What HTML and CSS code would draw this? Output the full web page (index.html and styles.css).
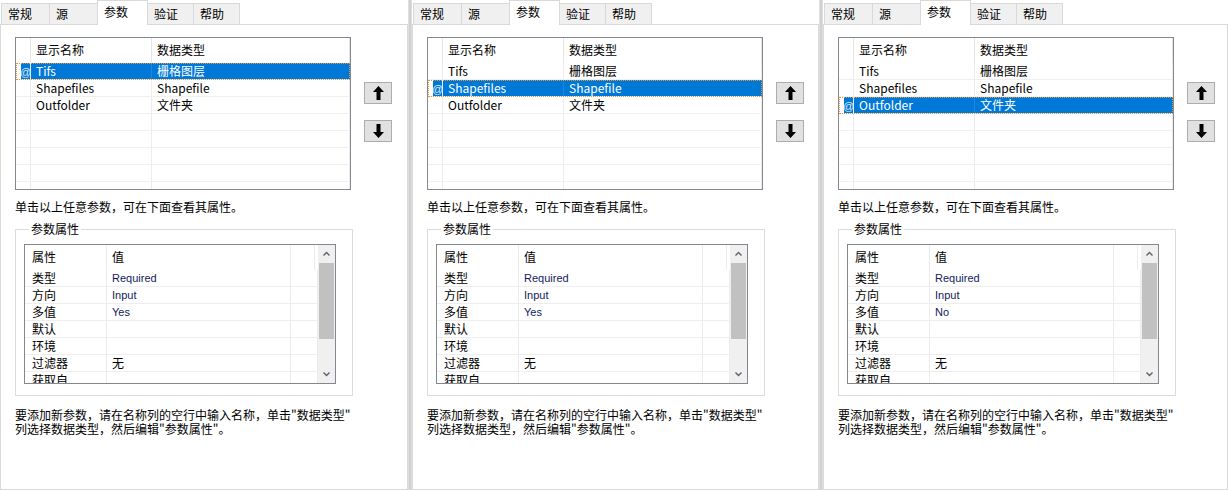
FILE: index.html
```html
<!DOCTYPE html>
<html lang="zh-CN">
<head>
<meta charset="utf-8">
<title>参数</title>
<link rel="stylesheet" href="styles.css">
</head>
<body>
<div class="screens">

  <section class="panel panel-a">
    <div class="tabs">
      <div class="tab">常规</div>
      <div class="tab">源</div>
      <div class="tab active">参数</div>
      <div class="tab narrow">验证</div>
      <div class="tab narrow">帮助</div>
    </div>
    <div class="page">
      <div class="top">
        <div class="plist">
          <div class="lrow head"><div class="rh"></div><div class="c1">显示名称</div><div class="c2">数据类型</div></div>
          <div class="lrow sel"><div class="rh"><span class="mark">@</span></div><div class="c1">Tifs</div><div class="c2">栅格图层</div></div>
          <div class="lrow"><div class="rh"></div><div class="c1">Shapefiles</div><div class="c2">Shapefile</div></div>
          <div class="lrow"><div class="rh"></div><div class="c1">Outfolder</div><div class="c2">文件夹</div></div>
          <div class="lrow"><div class="rh"></div><div class="c1"></div><div class="c2"></div></div>
          <div class="lrow"><div class="rh"></div><div class="c1"></div><div class="c2"></div></div>
          <div class="lrow"><div class="rh"></div><div class="c1"></div><div class="c2"></div></div>
          <div class="lrow"><div class="rh"></div><div class="c1"></div><div class="c2"></div></div>
          <div class="lrow"><div class="rh"></div><div class="c1"></div><div class="c2"></div></div>
        </div>
        <div class="btns">
          <div class="btn"><svg width="11" height="14" viewBox="0 0 11 14"><path d="M5.5 0 L11 6 L7.5 6 L7.5 14 L3.5 14 L3.5 6 L0 6 Z" fill="#000"/></svg></div>
          <div class="btn"><svg width="11" height="14" viewBox="0 0 11 14"><path d="M5.5 14 L11 8 L7.5 8 L7.5 0 L3.5 0 L3.5 8 L0 8 Z" fill="#000"/></svg></div>
        </div>
      </div>
      <p class="hint">单击以上任意参数，可在下面查看其属性。</p>
      <fieldset class="props">
        <legend>参数属性</legend>
        <div class="pgrid">
          <div class="pbody">
            <div class="prow phead"><div class="k">属性</div><div class="v">值</div><div class="e"></div></div>
            <div class="prow"><div class="k">类型</div><div class="v val">Required</div><div class="e"></div></div>
            <div class="prow"><div class="k">方向</div><div class="v val">Input</div><div class="e"></div></div>
            <div class="prow"><div class="k">多值</div><div class="v val">Yes</div><div class="e"></div></div>
            <div class="prow"><div class="k">默认</div><div class="v"></div><div class="e"></div></div>
            <div class="prow"><div class="k">环境</div><div class="v"></div><div class="e"></div></div>
            <div class="prow"><div class="k">过滤器</div><div class="v">无</div><div class="e"></div></div>
            <div class="prow"><div class="k">获取自</div><div class="v"></div><div class="e"></div></div>
          </div>
          <div class="scroll">
            <div class="sarrow"><svg width="7" height="5" viewBox="0 0 7 5"><path d="M0.5 4.5 L3.5 1.5 L6.5 4.5" fill="none" stroke="#606060" stroke-width="1.4"/></svg></div>
            <div class="strack"><div class="thumb"></div></div>
            <div class="sarrow"><svg width="7" height="5" viewBox="0 0 7 5"><path d="M0.5 0.5 L3.5 3.5 L6.5 0.5" fill="none" stroke="#606060" stroke-width="1.4"/></svg></div>
          </div>
        </div>
      </fieldset>
      <p class="note">要添加新参数，请在名称列的空行中输入名称，单击"数据类型"<br>列选择数据类型，然后编辑"参数属性"。</p>
    </div>
  </section>

  <div class="divider"></div>

  <section class="panel panel-b">
    <div class="tabs">
      <div class="tab">常规</div>
      <div class="tab">源</div>
      <div class="tab active">参数</div>
      <div class="tab narrow">验证</div>
      <div class="tab narrow">帮助</div>
    </div>
    <div class="page">
      <div class="top">
        <div class="plist">
          <div class="lrow head"><div class="rh"></div><div class="c1">显示名称</div><div class="c2">数据类型</div></div>
          <div class="lrow"><div class="rh"></div><div class="c1">Tifs</div><div class="c2">栅格图层</div></div>
          <div class="lrow sel"><div class="rh"><span class="mark">@</span></div><div class="c1">Shapefiles</div><div class="c2">Shapefile</div></div>
          <div class="lrow"><div class="rh"></div><div class="c1">Outfolder</div><div class="c2">文件夹</div></div>
          <div class="lrow"><div class="rh"></div><div class="c1"></div><div class="c2"></div></div>
          <div class="lrow"><div class="rh"></div><div class="c1"></div><div class="c2"></div></div>
          <div class="lrow"><div class="rh"></div><div class="c1"></div><div class="c2"></div></div>
          <div class="lrow"><div class="rh"></div><div class="c1"></div><div class="c2"></div></div>
          <div class="lrow"><div class="rh"></div><div class="c1"></div><div class="c2"></div></div>
        </div>
        <div class="btns">
          <div class="btn"><svg width="11" height="14" viewBox="0 0 11 14"><path d="M5.5 0 L11 6 L7.5 6 L7.5 14 L3.5 14 L3.5 6 L0 6 Z" fill="#000"/></svg></div>
          <div class="btn"><svg width="11" height="14" viewBox="0 0 11 14"><path d="M5.5 14 L11 8 L7.5 8 L7.5 0 L3.5 0 L3.5 8 L0 8 Z" fill="#000"/></svg></div>
        </div>
      </div>
      <p class="hint">单击以上任意参数，可在下面查看其属性。</p>
      <fieldset class="props">
        <legend>参数属性</legend>
        <div class="pgrid">
          <div class="pbody">
            <div class="prow phead"><div class="k">属性</div><div class="v">值</div><div class="e"></div></div>
            <div class="prow"><div class="k">类型</div><div class="v val">Required</div><div class="e"></div></div>
            <div class="prow"><div class="k">方向</div><div class="v val">Input</div><div class="e"></div></div>
            <div class="prow"><div class="k">多值</div><div class="v val">Yes</div><div class="e"></div></div>
            <div class="prow"><div class="k">默认</div><div class="v"></div><div class="e"></div></div>
            <div class="prow"><div class="k">环境</div><div class="v"></div><div class="e"></div></div>
            <div class="prow"><div class="k">过滤器</div><div class="v">无</div><div class="e"></div></div>
            <div class="prow"><div class="k">获取自</div><div class="v"></div><div class="e"></div></div>
          </div>
          <div class="scroll">
            <div class="sarrow"><svg width="7" height="5" viewBox="0 0 7 5"><path d="M0.5 4.5 L3.5 1.5 L6.5 4.5" fill="none" stroke="#606060" stroke-width="1.4"/></svg></div>
            <div class="strack"><div class="thumb"></div></div>
            <div class="sarrow"><svg width="7" height="5" viewBox="0 0 7 5"><path d="M0.5 0.5 L3.5 3.5 L6.5 0.5" fill="none" stroke="#606060" stroke-width="1.4"/></svg></div>
          </div>
        </div>
      </fieldset>
      <p class="note">要添加新参数，请在名称列的空行中输入名称，单击"数据类型"<br>列选择数据类型，然后编辑"参数属性"。</p>
    </div>
  </section>

  <div class="divider"></div>

  <section class="panel panel-c">
    <div class="tabs">
      <div class="tab">常规</div>
      <div class="tab">源</div>
      <div class="tab active">参数</div>
      <div class="tab narrow">验证</div>
      <div class="tab narrow">帮助</div>
    </div>
    <div class="page">
      <div class="top">
        <div class="plist">
          <div class="lrow head"><div class="rh"></div><div class="c1">显示名称</div><div class="c2">数据类型</div></div>
          <div class="lrow"><div class="rh"></div><div class="c1">Tifs</div><div class="c2">栅格图层</div></div>
          <div class="lrow"><div class="rh"></div><div class="c1">Shapefiles</div><div class="c2">Shapefile</div></div>
          <div class="lrow sel"><div class="rh"><span class="mark">@</span></div><div class="c1">Outfolder</div><div class="c2">文件夹</div></div>
          <div class="lrow"><div class="rh"></div><div class="c1"></div><div class="c2"></div></div>
          <div class="lrow"><div class="rh"></div><div class="c1"></div><div class="c2"></div></div>
          <div class="lrow"><div class="rh"></div><div class="c1"></div><div class="c2"></div></div>
          <div class="lrow"><div class="rh"></div><div class="c1"></div><div class="c2"></div></div>
          <div class="lrow"><div class="rh"></div><div class="c1"></div><div class="c2"></div></div>
        </div>
        <div class="btns">
          <div class="btn"><svg width="11" height="14" viewBox="0 0 11 14"><path d="M5.5 0 L11 6 L7.5 6 L7.5 14 L3.5 14 L3.5 6 L0 6 Z" fill="#000"/></svg></div>
          <div class="btn"><svg width="11" height="14" viewBox="0 0 11 14"><path d="M5.5 14 L11 8 L7.5 8 L7.5 0 L3.5 0 L3.5 8 L0 8 Z" fill="#000"/></svg></div>
        </div>
      </div>
      <p class="hint">单击以上任意参数，可在下面查看其属性。</p>
      <fieldset class="props">
        <legend>参数属性</legend>
        <div class="pgrid">
          <div class="pbody">
            <div class="prow phead"><div class="k">属性</div><div class="v">值</div><div class="e"></div></div>
            <div class="prow"><div class="k">类型</div><div class="v val">Required</div><div class="e"></div></div>
            <div class="prow"><div class="k">方向</div><div class="v val">Input</div><div class="e"></div></div>
            <div class="prow"><div class="k">多值</div><div class="v val">No</div><div class="e"></div></div>
            <div class="prow"><div class="k">默认</div><div class="v"></div><div class="e"></div></div>
            <div class="prow"><div class="k">环境</div><div class="v"></div><div class="e"></div></div>
            <div class="prow"><div class="k">过滤器</div><div class="v">无</div><div class="e"></div></div>
            <div class="prow"><div class="k">获取自</div><div class="v"></div><div class="e"></div></div>
          </div>
          <div class="scroll">
            <div class="sarrow"><svg width="7" height="5" viewBox="0 0 7 5"><path d="M0.5 4.5 L3.5 1.5 L6.5 4.5" fill="none" stroke="#606060" stroke-width="1.4"/></svg></div>
            <div class="strack"><div class="thumb"></div></div>
            <div class="sarrow"><svg width="7" height="5" viewBox="0 0 7 5"><path d="M0.5 0.5 L3.5 3.5 L6.5 0.5" fill="none" stroke="#606060" stroke-width="1.4"/></svg></div>
          </div>
        </div>
      </fieldset>
      <p class="note">要添加新参数，请在名称列的空行中输入名称，单击"数据类型"<br>列选择数据类型，然后编辑"参数属性"。</p>
    </div>
  </section>

</div>
</body>
</html>
```
FILE: styles.css
```css
html, body {
  margin: 0;
  padding: 0;
}
body {
  width: 1228px;
  height: 490px;
  overflow: hidden;
  background: #fff;
  font-family: "Noto Sans CJK SC", "Noto Sans", sans-serif;
  font-size: 12px;
  color: #000;
}
.screens {
  display: flex;
  height: 490px;
}
.panel {
  display: flex;
  flex-direction: column;
  background: #fff;
  flex: none;
}
.panel-a { width: 408px; }
.panel-b { width: 407px; }
.panel-c { width: 405px; }
.divider {
  width: 4px;
  flex: none;
  background: linear-gradient(to right, #e6e6e6, #cacaca 50%, #e6e6e6);
}

/* tabs */
.tabs {
  display: flex;
  align-items: flex-end;
  height: 24px;
  border-bottom: 1px solid #d9d9d9;
  padding-left: 1px;
  background: #fff;
}
.tab {
  width: 49px;
  height: 21px;
  box-sizing: border-box;
  border: 1px solid #d9d9d9;
  border-bottom: none;
  background: #f0f0f0;
  margin-right: -1px;
  padding-left: 6px;
  line-height: 20px;
  white-space: nowrap;
}
.tab.narrow { width: 47px; }
.tab.active {
  width: 51px;
  height: 25px;
  margin-bottom: -1px;
  background: #fff;
  line-height: 22px;
  padding-left: 6px;
  position: relative;
  z-index: 1;
}

/* page */
.page {
  flex: 1;
  border: 1px solid #d9d9d9;
  border-top: none;
  padding: 12px 0 0 14px;
}
.top {
  display: flex;
}
.plist {
  width: 336px;
  height: 153px;
  box-sizing: border-box;
  border: 1px solid #828790;
  overflow: hidden;
  background: #fff;
}
.lrow {
  display: flex;
  height: 17px;
  box-sizing: border-box;
  border-bottom: 1px solid #f0f0f0;
  line-height: 16px;
}
.lrow.head {
  height: 25px;
  border-bottom: none;
  line-height: 24px;
}
.lrow > div {
  box-sizing: border-box;
  border-right: 1px solid #ececec;
  white-space: nowrap;
  overflow: hidden;
}
.lrow.head > div { border-right-color: #e5e5e5; }
.rh { width: 15px; }
.c1 { width: 121px; padding-left: 5px; }
.c2 { width: 198px; padding-left: 5px; }
.lrow.sel {
  outline: 1px dotted #e39a3b;
  outline-offset: -1px;
}
.lrow.sel .c1, .lrow.sel .c2 {
  background: #0078d7;
  color: #fff;
  border-right-color: #0078d7;
}
.lrow.sel .c1 { border-right-color: #1c86dc; }
.lrow.sel .rh {
  background: linear-gradient(to right, #fff 5px, #0078d7 5px);
  color: #dfeaf5;
}
.mark {
  display: inline-block;
  margin-left: 4px;
  font-family: "Liberation Sans", sans-serif;
  font-size: 11px;
}

.btns {
  display: flex;
  flex-direction: column;
  gap: 16px;
  padding-top: 45px;
  margin-left: 13px;
}
.btn {
  width: 28px;
  height: 22px;
  box-sizing: border-box;
  border: 1px solid #adadad;
  background: #e1e1e1;
  display: flex;
  align-items: center;
  justify-content: center;
}

.hint {
  margin: 10px 0 0 0;
  line-height: 14px;
}

/* property group */
.props {
  margin: 8px 0 0 0;
  width: 338px;
  box-sizing: border-box;
  border: 1px solid #dcdcdc;
  padding: 8px 0 11px 8px;
  min-inline-size: 0;
}
.props legend {
  margin-left: 5px;
  padding: 0 2px;
  line-height: 14px;
}
.pgrid {
  width: 312px;
  height: 140px;
  box-sizing: border-box;
  border: 1px solid #828790;
  display: flex;
  overflow: hidden;
  background: #fff;
}
.pbody {
  flex: 1;
  overflow: hidden;
}
.prow {
  display: flex;
  height: 17px;
  box-sizing: border-box;
  border-bottom: 1px solid #eeeeee;
  line-height: 16px;
}
.prow.phead {
  height: 25px;
  border-bottom: none;
  line-height: 24px;
}
.prow > div {
  box-sizing: border-box;
  border-right: 1px solid #ececec;
  white-space: nowrap;
}
.k { width: 82px; padding-left: 7px; }
.v { width: 184px; padding-left: 5px; }
.e { flex: 1; }
.prow.phead .e { margin-right: 3px; }
.val {
  font-family: "Liberation Sans", sans-serif;
  font-size: 11px;
  color: #121a5c;
}
.scroll {
  width: 17px;
  background: #f0f0f0;
  display: flex;
  flex-direction: column;
}
.sarrow {
  height: 17px;
  display: flex;
  align-items: center;
  justify-content: center;
}
.strack {
  flex: 1;
}
.thumb {
  height: 76px;
  margin: 1px 1px 0 1px;
  background: #c1c1c1;
}

.note {
  margin: 12px 0 0 0;
  line-height: 14px;
}
```
